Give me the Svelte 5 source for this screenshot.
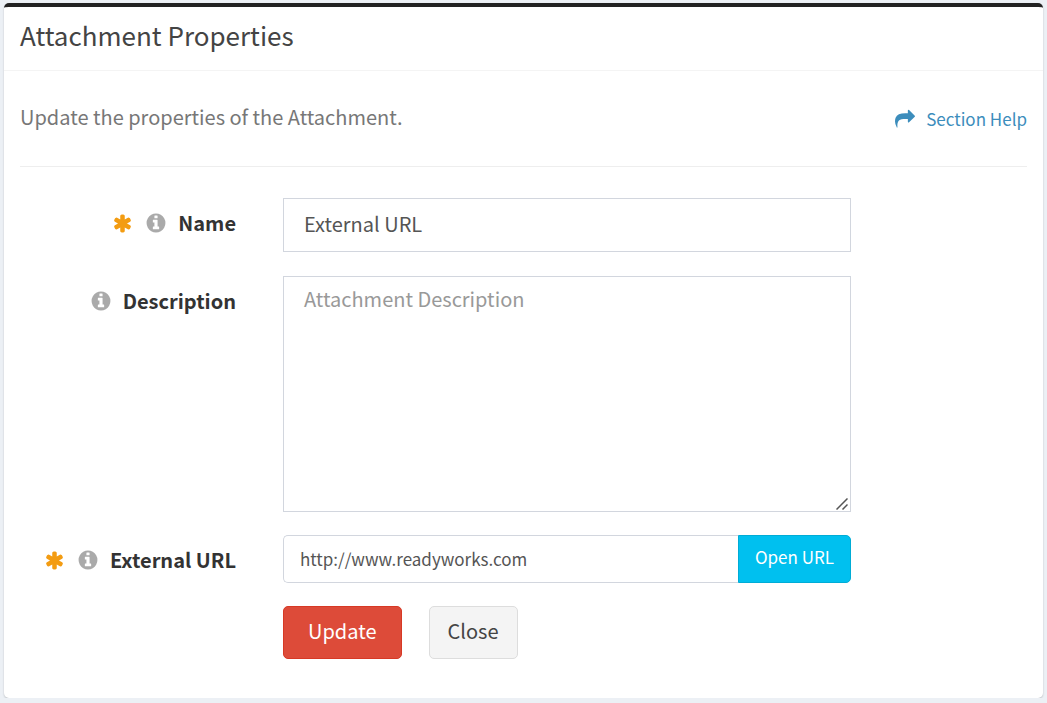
<script>
  let name = $state('External URL');
  let description = $state('');
  let url = $state('http://www.readyworks.com');

  function openUrl() {
    window.open(url, '_blank');
  }
</script>

{#snippet required()}
  <svg class="icon-required" viewBox="0 0 1792 1792" role="img" aria-label="Required">
    <path d="M1546 1050q46 26 59.500 77.500t-12.500 97.500l-64 110q-26 46-77.500 59.500t-97.500-12.500l-266-153v307q0 52-38 90t-90 38h-128q-52 0-90-38t-38-90v-307l-266 153q-46 26-97.500 12.500t-77.500-59.500l-64-110q-26-46-12.500-97.500t59.500-77.500l266-154-266-154q-46-26-59.500-77.500t12.500-97.500l64-110q26-46 77.500-59.500t97.500 12.500l266 153v-307q0-52 38-90t90-38h128q52 0 90 38t38 90v307l266-153q46-26 97.500-12.500t77.500 59.500l64 110q26 46 12.500 97.500t-59.500 77.500l-266 154z" />
  </svg>
{/snippet}

{#snippet info()}
  <svg class="icon-info" viewBox="0 0 1792 1792" aria-hidden="true">
    <path d="M1152 1376v-160q0-14-9-23t-23-9h-96v-512q0-14-9-23t-23-9h-320q-14 0-23 9t-9 23v160q0 14 9 23t23 9h96v320h-96q-14 0-23 9t-9 23v160q0 14 9 23t23 9h448q14 0 23-9t9-23zm-128-896v-160q0-14-9-23t-23-9h-192q-14 0-23 9t-9 23v160q0 14 9 23t23 9h192q14 0 23-9t9-23zm640 416q0 209-103 385.500t-279.500 279.500-385.500 103-385.500-103-279.500-279.500-103-385.500 103-385.500 279.500-279.500 385.500-103 385.500 103 279.500 279.500 103 385.500z" />
  </svg>
{/snippet}

<section class="box">
  <header class="box-header">
    <h3>Attachment Properties</h3>
  </header>

  <div class="box-body">
    <div class="intro">
      <p>Update the properties of the Attachment.</p>
      <a class="help" href="#help">
        <svg class="icon-share" viewBox="0 0 1792 1792" aria-hidden="true">
          <path d="M1792 640q0 26-19 45l-512 512q-19 19-45 19t-45-19-19-45v-256h-224q-98 0-175.500 6t-154 21.500-133 42.500-105.500 69.500-80 101-48.500 138.500-17.500 181q0 55 5 123 0 6 2.500 23.500t2.500 26.500q0 15-8.500 25t-23.500 10q-16 0-28-17-7-9-13-22t-13.500-30-10.500-24q-127-285-127-451 0-199 53-333 162-403 875-403h224v-256q0-26 19-45t45-19 45 19l512 512q19 19 19 45z" />
        </svg>
        Section Help
      </a>
    </div>

    <form onsubmit={(e) => e.preventDefault()}>
      <div class="row">
        <div class="row-label">
          {@render required()}
          {@render info()}
          <label for="att-name">Name</label>
        </div>
        <input id="att-name" class="control" type="text" bind:value={name} />
      </div>

      <div class="row">
        <div class="row-label">
          {@render info()}
          <label for="att-desc">Description</label>
        </div>
        <div class="textarea-wrap">
          <textarea id="att-desc" class="control" placeholder="Attachment Description" bind:value={description}></textarea>
          <svg class="grip" viewBox="0 0 12 12" aria-hidden="true">
            <path d="M0.500 11.500L11.500 0.500M6.500 11.500L11.500 6.500" />
          </svg>
        </div>
      </div>

      <div class="row">
        <div class="row-label">
          {@render required()}
          {@render info()}
          <label for="att-url">External URL</label>
        </div>
        <div class="input-group">
          <input id="att-url" type="text" bind:value={url} />
          <button type="button" class="btn-open" onclick={openUrl}>Open URL</button>
        </div>
      </div>

      <div class="row">
        <div class="actions">
          <button type="submit" class="btn btn-danger">Update</button>
          <button type="button" class="btn btn-default">Close</button>
        </div>
      </div>
    </form>
  </div>
</section>

<style>
  :global(body) {
    background: #ecf0f5;
  }

  .box,
  .box input,
  .box textarea,
  .box button {
    font-family: 'Source Sans Pro', 'Noto Sans CJK SC', 'Noto Sans', sans-serif;
  }

  .box,
  .box * {
    box-sizing: border-box;
  }

  .box {
    margin: 3px 4px 0;
    background: #fff;
    border-top: 4px solid #222;
    border-radius: 5px;
    box-shadow: 0 1px 2px rgba(0, 0, 0, 0.2);
    color: #333;
    font-size: 20px;
    line-height: 28px;
  }

  .box-header {
    padding: 12px 16px 19px;
    border-bottom: 1px solid #f4f4f4;
  }
  h3 {
    margin: 0;
    font-size: 26px;
    font-weight: 400;
    line-height: 32px;
    color: #444;
  }

  .box-body {
    padding: 0 16px 39px;
  }

  .intro {
    display: flex;
    align-items: center;
    justify-content: space-between;
    height: 96px;
    margin-bottom: 31px;
    border-bottom: 1px solid #eee;
  }
  .intro p {
    margin: 0;
    padding-bottom: 4px;
    color: #777;
  }

  .help {
    display: flex;
    align-items: center;
    gap: 11px;
    color: #3c8dbc;
    font-size: 17px;
    text-decoration: none;
  }

  /* Form rows */
  .row {
    display: grid;
    grid-template-columns: 263fr 568fr 176fr;
    margin-bottom: 23px;
  }
  .row:first-child {
    margin-bottom: 24px;
  }
  .row:last-child {
    margin-bottom: 0;
  }
  .row-label {
    display: flex;
    align-items: center;
    align-self: start;
    justify-content: flex-end;
    padding: 11px 47px 0 0;
  }
  label {
    margin-left: 11px;
    font-weight: 700;
  }

  .control {
    width: 100%;
    height: 54px;
    padding: 8px 20px 12px;
    border: 1px solid #d2d6de;
    border-radius: 0;
    background: #fff;
    color: #555;
    font-size: 20px;
    line-height: 28px;
  }
  textarea.control {
    display: block;
    height: 236px;
    resize: vertical;
  }
  .control::placeholder {
    color: #999;
  }

  .textarea-wrap {
    position: relative;
  }
  textarea::-webkit-resizer {
    background: transparent;
  }
  .grip {
    position: absolute;
    right: 3px;
    bottom: 2px;
    width: 12px;
    height: 12px;
    fill: none;
    stroke: #555;
    stroke-width: 1.5;
    pointer-events: none;
  }

  .input-group {
    display: flex;
    height: 48px;
  }
  .input-group input {
    flex: 1;
    min-width: 0;
    padding: 0 16px 2px;
    border: 1px solid #d2d6de;
    border-right: 0;
    border-radius: 5px 0 0 5px;
    color: #555;
    font-size: 17px;
  }
  .btn-open {
    padding: 0 16px 6px;
    border: 1px solid #00acd6;
    border-radius: 0 5px 5px 0;
    background: #00c0ef;
    color: #fff;
    font-size: 17px;
    cursor: pointer;
  }

  .actions {
    grid-column: 2;
    display: flex;
    gap: 27px;
  }
  .btn {
    height: 53px;
    border: 1px solid #ddd;
    border-radius: 5px;
    font-size: 20px;
    cursor: pointer;
  }
  .btn-danger {
    padding: 0 24px 4px;
    border-color: #d73925;
    background: #dd4b39;
    color: #fff;
  }
  .btn-default {
    padding: 0 18px 4px;
    background: #f4f4f4;
    color: #444;
  }

  /* Icons */
  .icon-required,
  .icon-info,
  .icon-share {
    flex-shrink: 0;
  }
  .icon-required {
    width: 21px;
    height: 21px;
    margin-right: 12px;
    fill: #f39c12;
  }
  .icon-info {
    width: 22px;
    height: 22px;
    fill: #aaa;
  }
  .icon-share {
    width: 20px;
    height: 20px;
    fill: #3c8dbc;
  }
</style>
